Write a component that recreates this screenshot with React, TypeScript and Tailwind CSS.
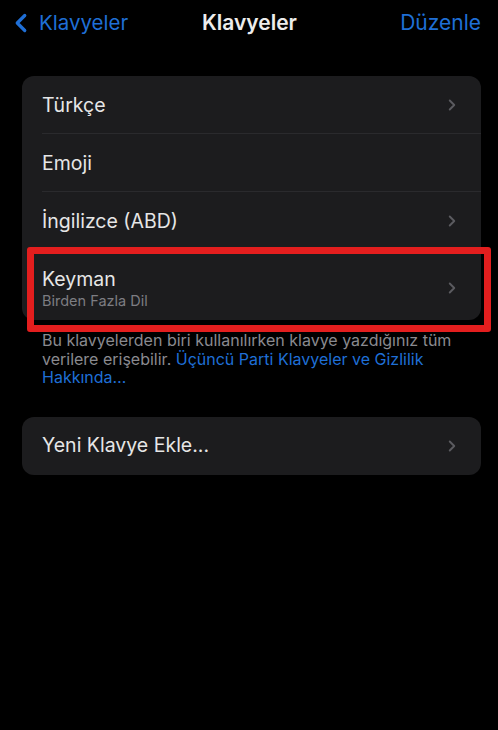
import { ChevronLeft, ChevronRight } from "lucide-react";

type Row = { label: string; sub?: string; chevron: boolean };

const rows: Row[] = [
  { label: "Türkçe", chevron: true },
  { label: "Emoji", chevron: false },
  { label: "İngilizce (ABD)", chevron: true },
  { label: "Keyman", sub: "Birden Fazla Dil", chevron: true },
];

export default function App() {
  return (
    <div
      className="w-[498px] h-[730px] bg-black text-white overflow-hidden"
      style={{ fontFamily: "Inter, 'Noto Sans', sans-serif" }}
    >
      {/* Nav bar */}
      <div className="relative flex items-center justify-between h-[46px] pl-[6px] pr-[17px]">
        <div className="flex items-center text-[#1f6fd6]">
          <ChevronLeft className="w-[30px] h-[30px]" strokeWidth={2.6} />
          <span className="text-[20.5px] ml-[3px]">Klavyeler</span>
        </div>
        <span className="absolute left-[202px] text-[21px] font-semibold text-[#ececec]">
          Klavyeler
        </span>
        <span className="text-[21px] text-[#1f6fd6]">Düzenle</span>
      </div>

      <div className="pl-[22px] pt-[30px] pr-[17px]">
        {/* Keyboards list */}
        <div className="relative bg-[#1c1c1e] rounded-[12px]">
          {rows.map((r, i) => (
            <div key={r.label} className="pl-[20px]">
              <div
                className={
                  "flex items-center justify-between pr-[20px] " +
                  (r.sub ? "h-[70px] pt-[6px]" : "h-[58px]") +
                  (i < rows.length - 1 ? " border-b border-[#2a2a2d]" : "")
                }
              >
                <div className="flex flex-col">
                  <span className="text-[19.5px] text-[#e6e6e6] leading-[24px]">{r.label}</span>
                  {r.sub && (
                    <span className="text-[14.5px] text-[#7d7d82] leading-[19px]">{r.sub}</span>
                  )}
                </div>
                {r.chevron && (
                  <ChevronRight className="w-[18px] h-[18px] text-[#5b5b60]" strokeWidth={2.5} />
                )}
              </div>
            </div>
          ))}
          {/* highlight box */}
          <div className="absolute left-[5px] right-[-10px] top-[171px] h-[85px] border-[7px] border-[#e31e1e] rounded-[3px]" />
        </div>

        <p className="mt-[11px] pl-[20px] pr-[4px] text-[16px] leading-[18.5px] text-[#8a8a8f]">
          Bu klavyelerden biri kullanılırken klavye yazdığınız tüm verilere erişebilir.{" "}
          <span className="text-[#1f6fd6]">Üçüncü Parti Klavyeler ve Gizlilik Hakkında…</span>
        </p>

        <div className="mt-[30px] bg-[#1c1c1e] rounded-[12px] h-[58px] flex items-center justify-between pl-[20px] pr-[20px]">
          <span className="text-[19.5px] text-[#e6e6e6]">Yeni Klavye Ekle...</span>
          <ChevronRight className="w-[18px] h-[18px] text-[#5b5b60]" strokeWidth={2.5} />
        </div>
      </div>
    </div>
  );
}
